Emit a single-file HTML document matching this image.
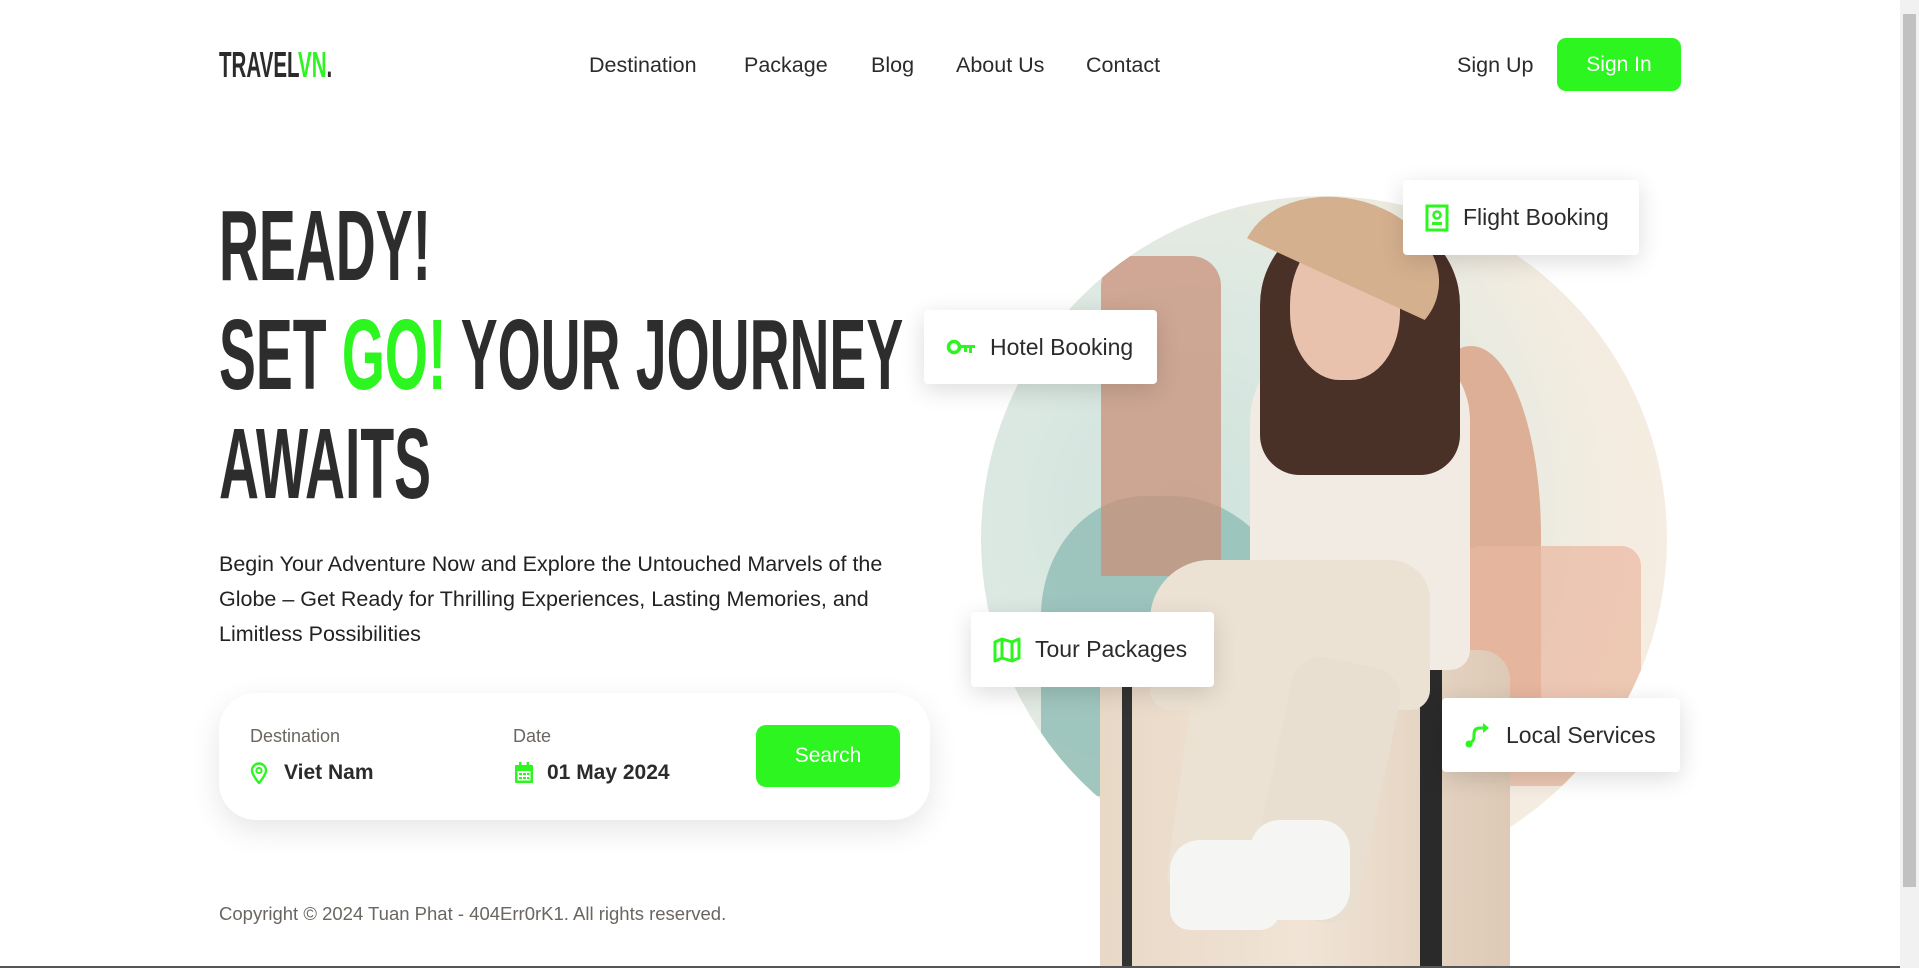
<!DOCTYPE html>
<html><head><meta charset="utf-8">
<style>
*{margin:0;padding:0;box-sizing:border-box}
body{width:1919px;height:968px;overflow:hidden;background:#fff;font-family:"Liberation Sans",sans-serif;color:#2b2b2b;position:relative}
.a{position:absolute}
.logo{left:219px;top:44px;font-size:36px;font-weight:bold;transform:scaleX(.57);transform-origin:left;color:#2b2b2b}
.g{color:#2cf51f}
.nav{top:53px;font-size:21.5px;color:#2b2b2b}
.btn{background:#2cf51f;color:#fff;border-radius:9px;display:flex;align-items:center;justify-content:center;font-size:21px}
.h{left:219px;font-size:100px;font-weight:bold;transform:scaleX(.553);transform-origin:left;white-space:nowrap;color:#2d2d2d;line-height:1}
.card{background:#fff;border-radius:4px;box-shadow:0 6px 24px rgba(0,0,0,.14);display:flex;align-items:center;font-size:23px;color:#2b2b2b;padding-left:22px;gap:14px}
</style></head><body>
<div class="a logo">TRAVEL<span class="g">VN</span>.</div>
<div class="a nav" style="left:589px">Destination</div>
<div class="a nav" style="left:744px">Package</div>
<div class="a nav" style="left:871px">Blog</div>
<div class="a nav" style="left:956px">About Us</div>
<div class="a nav" style="left:1086px">Contact</div>
<div class="a nav" style="left:1457px">Sign Up</div>
<div class="a btn" style="left:1557px;top:38px;width:124px;height:53px">Sign In</div>

<div class="a h" style="top:196px">READY!</div>
<div class="a h" style="top:305px">SET <span class="g">GO!</span> YOUR JOURNEY</div>
<div class="a h" style="top:414px">AWAITS</div>

<div class="a" style="left:219px;top:547px;width:705px;font-size:21.5px;line-height:35px;color:#222">Begin Your Adventure Now and Explore the Untouched Marvels of the Globe – Get Ready for Thrilling Experiences, Lasting Memories, and Limitless Possibilities</div>

<div class="a" style="left:219px;top:693px;width:711px;height:127px;background:#fff;border-radius:37px;box-shadow:0 10px 30px rgba(0,0,0,.1)"></div>
<div class="a" style="left:250px;top:726px;font-size:18px;color:#6b6660">Destination</div>
<div class="a" style="left:513px;top:726px;font-size:18px;color:#6b6660">Date</div>
<svg class="a" style="left:250px;top:762px" width="18" height="22" viewBox="0 0 18 22"><path d="M9 21C9 21 2 13 2 8.5a7 7 0 0 1 14 0C16 13 9 21 9 21z" fill="none" stroke="#2cf51f" stroke-width="2.4"/><circle cx="9" cy="8.5" r="2.6" fill="none" stroke="#2cf51f" stroke-width="2"/></svg>
<div class="a" style="left:284px;top:761px;font-size:21px;font-weight:bold;color:#2b2b2b">Viet Nam</div>
<svg class="a" style="left:514px;top:762px" width="20" height="22" viewBox="0 0 20 22"><rect x="1" y="3" width="18" height="18" rx="1" fill="#2cf51f"/><rect x="3.5" y="9" width="13" height="9.5" fill="#fff"/><rect x="5" y="11" width="3" height="2" fill="#2cf51f"/><rect x="9" y="11" width="3" height="2" fill="#2cf51f"/><rect x="13" y="11" width="2.5" height="2" fill="#2cf51f"/><rect x="5" y="15" width="3" height="2" fill="#2cf51f"/><rect x="9" y="15" width="3" height="2" fill="#2cf51f"/><rect x="13" y="15" width="2.5" height="2" fill="#2cf51f"/><rect x="5" y="0" width="2.4" height="5" fill="#2cf51f"/><rect x="12.6" y="0" width="2.4" height="5" fill="#2cf51f"/></svg>
<div class="a" style="left:547px;top:761px;font-size:21px;font-weight:bold;color:#2b2b2b">01 May 2024</div>
<div class="a btn" style="left:756px;top:725px;width:144px;height:62px;border-radius:10px">Search</div>

<div class="a" style="left:219px;top:903px;font-size:18.5px;color:#6b6660">Copyright © 2024 Tuan Phat - 404Err0rK1. All rights reserved.</div>

<div class="a" style="left:981px;top:196px;width:686px;height:686px;border-radius:50%;background:radial-gradient(circle at 30% 45%,#cfe3dc 0,#dce9e2 35%,#f4ece0 70%,#f8efe3 100%);overflow:hidden">
  <div class="a" style="left:60px;top:300px;width:260px;height:300px;background:#8fbdb5;border-radius:40% 50% 0 0;opacity:.8"></div>
  <div class="a" style="left:420px;top:150px;width:140px;height:380px;background:#dba58a;border-radius:50% 50% 10px 10px;opacity:.85"></div>
  <div class="a" style="left:480px;top:350px;width:180px;height:240px;background:#e9b89f;opacity:.7;border-radius:20px"></div>
  <div class="a" style="left:120px;top:60px;width:120px;height:320px;background:#c99079;opacity:.75;border-radius:30px 30px 0 0"></div>
</div>
<div class="a" style="left:1100px;top:650px;width:410px;height:318px;background:linear-gradient(90deg,#e8d8c6,#f1e4d6 50%,#ddc9b5);border-radius:30px 30px 0 0"></div>
<div class="a" style="left:1420px;top:650px;width:22px;height:318px;background:#2a2a2a"></div>
<div class="a" style="left:1122px;top:660px;width:10px;height:308px;background:#333"></div>
<div class="a" style="left:1250px;top:340px;width:220px;height:330px;background:#f1ebe3;border-radius:80px 80px 20px 20px"></div>
<div class="a" style="left:1150px;top:560px;width:280px;height:150px;background:#ece2d4;border-radius:60px 40px 20px 20px"></div>
<div class="a" style="left:1180px;top:660px;width:140px;height:250px;background:#ece2d4;border-radius:30px;transform:rotate(8deg)"></div>
<div class="a" style="left:1270px;top:660px;width:110px;height:260px;background:#e9dfd0;border-radius:30px;transform:rotate(12deg)"></div>
<div class="a" style="left:1170px;top:840px;width:110px;height:90px;background:#f5f5f3;border-radius:30px 30px 20px 20px"></div>
<div class="a" style="left:1250px;top:820px;width:100px;height:100px;background:#f5f5f3;border-radius:30px"></div>
<div class="a" style="left:1260px;top:215px;width:200px;height:260px;background:#4a3128;border-radius:90px 90px 40px 40px"></div>
<div class="a" style="left:1290px;top:230px;width:110px;height:150px;background:#e8c2ad;border-radius:50% 50% 45% 45%"></div>
<div class="a" style="left:1240px;top:198px;width:200px;height:150px;border-radius:50%;background:#d5b08f;clip-path:polygon(0 0,100% 0,100% 70%,0 40%);transform:rotate(12deg)"></div>

<div class="a card" style="left:1403px;top:180px;width:236px;height:75px"><svg width="24" height="28" viewBox="0 0 24 28"><rect x="2" y="2" width="20" height="24" fill="none" stroke="#2cf51f" stroke-width="3"/><circle cx="12" cy="11" r="3.5" fill="none" stroke="#2cf51f" stroke-width="2.5"/><rect x="7" y="18" width="10" height="3" fill="#2cf51f"/></svg>Flight Booking</div>
<div class="a card" style="left:924px;top:310px;width:233px;height:74px"><svg width="30" height="20" viewBox="0 0 30 20"><circle cx="8" cy="10" r="5.5" fill="none" stroke="#2cf51f" stroke-width="3.5"/><path d="M13 8h16v3h-3v5h-3v-5h-2v4h-3v-4h-5z" fill="#2cf51f"/></svg>Hotel Booking</div>
<div class="a card" style="left:971px;top:612px;width:243px;height:75px"><svg width="28" height="26" viewBox="0 0 28 26"><path d="M2 5l7-3 10 3 7-3v19l-7 3-10-3-7 3z M9 2v19 M19 5v19" fill="none" stroke="#2cf51f" stroke-width="3" stroke-linejoin="round"/></svg>Tour Packages</div>
<div class="a card" style="left:1442px;top:698px;width:238px;height:74px"><svg width="28" height="28" viewBox="0 0 28 28"><circle cx="5" cy="23" r="3.5" fill="#2cf51f"/><path d="M7 21c3-1 3-4 3-8s2-6 6-6h6" fill="none" stroke="#2cf51f" stroke-width="3"/><path d="M19 2l6 5-6 5z" fill="#2cf51f"/></svg>Local Services</div>

<div class="a" style="left:1900px;top:0;width:19px;height:968px;background:#f1f1f1"></div>
<div class="a" style="left:1903px;top:14px;width:13px;height:873px;background:#c1c1c1"></div>
<div class="a" style="left:0;top:966px;width:1900px;height:2px;background:#555"></div>
</body></html>
